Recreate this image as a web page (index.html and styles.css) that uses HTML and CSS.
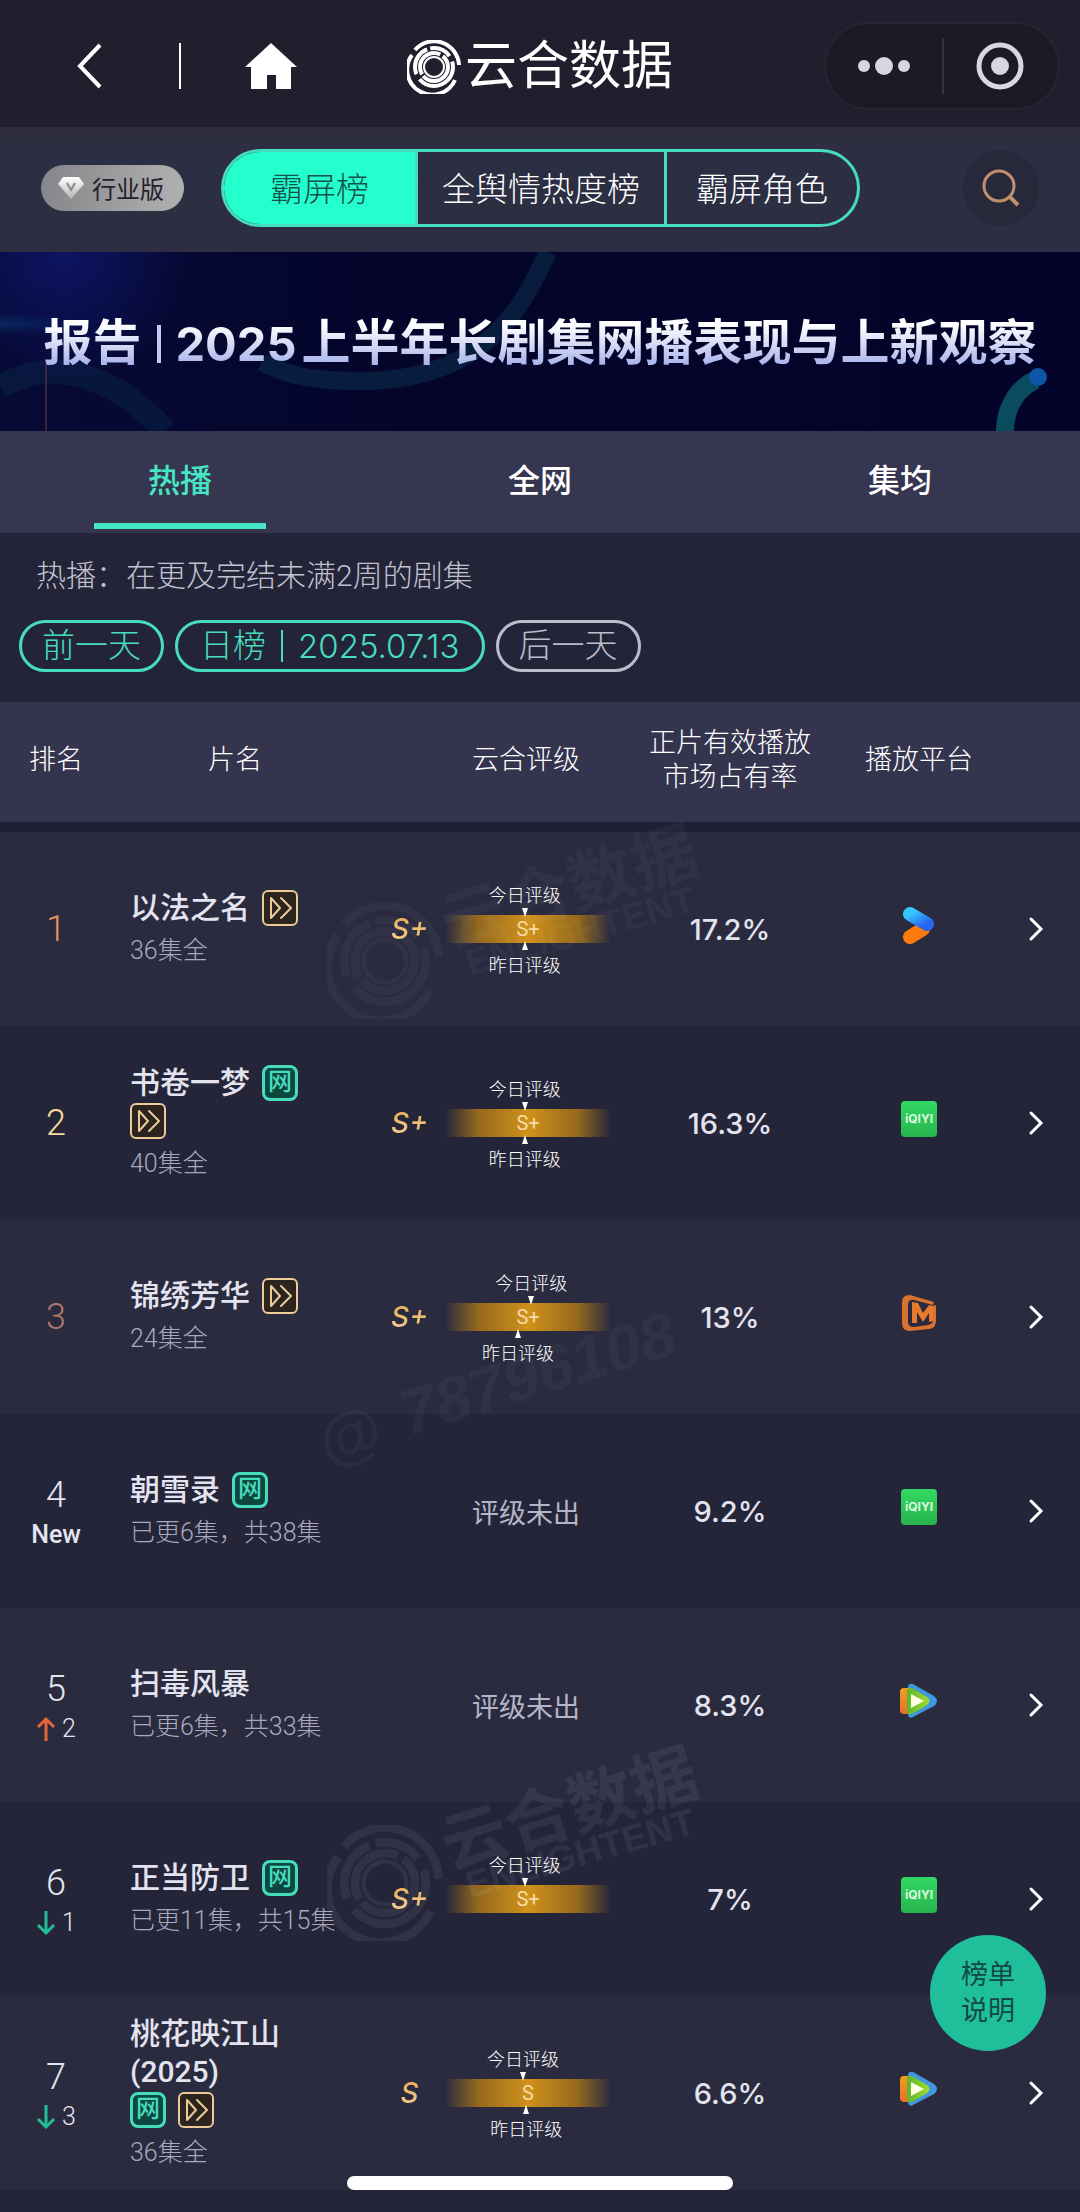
FILE: index.html
```html
<!DOCTYPE html>
<html lang="zh-CN">
<head>
<meta charset="utf-8">
<meta name="viewport" content="width=device-width">
<title>云合数据</title>
<link rel="stylesheet" href="styles.css">
</head>
<body>
<svg class="defs" aria-hidden="true">
  <defs>
    <linearGradient id="g-blue" x1="0" y1="0" x2="1" y2="1"><stop offset="0" stop-color="#35c8ff"/><stop offset="1" stop-color="#2a62f2"/></linearGradient>
    <linearGradient id="g-orange" x1="0" y1="0" x2="0" y2="1"><stop offset="0" stop-color="#f0a020"/><stop offset="1" stop-color="#e8702a"/></linearGradient>
    <linearGradient id="g-lime" x1="0" y1="0" x2="1" y2="0"><stop offset="0" stop-color="#5cb52c"/><stop offset="1" stop-color="#a5dc2e"/></linearGradient>
    <linearGradient id="g-gem" x1="0" y1="0" x2="0" y2="1"><stop offset="0" stop-color="#ffffff"/><stop offset="1" stop-color="#b4b4b4"/></linearGradient>
  </defs>
  <symbol id="youku" viewBox="0 0 36 40">
    <path d="M9 32 L22 24" stroke="#ff7a0e" stroke-width="14" stroke-linecap="round"/>
    <path d="M9 9 L26 19" stroke="url(#g-blue)" stroke-width="14" stroke-linecap="round"/>
  </symbol>
  <symbol id="mango" viewBox="0 0 36 38">
    <path fill-rule="evenodd" d="M9 1 L33 8 L32 11 L13 6 Q7 5 7 11 V28 Q7 33 13 33 L27 31 Q32 30 32 26 V12 L35 11 V27 Q35 34 28 35 L9 37 Q1 37 1 29 V8 Q1 1 9 1Z" fill="#d9722e"/>
    <path d="M11 29 V8 L17 9 L22 19 L28 11 L32 12 V27 L28 28 V19 L22 28 L16 18 V29Z" fill="#e87a2c"/>
  </symbol>
  <symbol id="tencent" viewBox="0 0 40 36">
    <path d="M9 3 Q10 0 14 1 L35 13 Q41 18 35 23 L14 34 Q10 36 9 32Z" fill="#3f97de"/>
    <path d="M1 9 Q1 5 5 5 L11 5 V31 H5 Q1 31 1 27Z" fill="url(#g-orange)"/>
    <path d="M8 7 Q9 4 13 5 L28 14 Q33 18 28 22 L13 31 Q9 32 8 29Z" fill="url(#g-lime)"/>
    <path d="M12 11 L25 18 L12 25Z" fill="#ffffe2"/>
  </symbol>
  <symbol id="chevron" viewBox="0 0 16 26">
    <path d="M3 3 L13 13 L3 23" fill="none" stroke="#fff" stroke-width="3" stroke-linecap="round"/>
  </symbol>
  <symbol id="vip" viewBox="0 0 36 36">
    <rect x="1" y="1" width="34" height="34" rx="5" fill="#2b241f" stroke="#eccb98" stroke-width="2"/>
    <path d="M9 8 V28 L18 18Z M19 8 L29 18 L19 28" fill="none" stroke="#eccb98" stroke-width="2" stroke-linejoin="round" stroke-linecap="round"/>
  </symbol>
  <symbol id="up" viewBox="0 0 20 26">
    <path d="M10 25 V3 M2 11 L10 3 L18 11" fill="none" stroke="currentColor" stroke-width="3"/>
  </symbol>
  <symbol id="down" viewBox="0 0 20 26">
    <path d="M10 1 V23 M2 15 L10 23 L18 15" fill="none" stroke="currentColor" stroke-width="3"/>
  </symbol>
  <symbol id="rings" viewBox="0 0 54 54">
    <g fill="none" stroke="currentColor">
      <circle cx="27" cy="27" r="10" stroke-width="2"/>
      <circle cx="27" cy="27" r="14" stroke-width="4" stroke-dasharray="34 2 36 3"/>
      <circle cx="27" cy="27" r="19" stroke-width="4" stroke-dasharray="46 6 30 3 22 6"/>
      <path d="M8 10 A25 25 0 0 1 52 25 M48 40 A25 25 0 1 1 5 15" stroke-width="4"/>
    </g>
  </symbol>
</svg>

<header class="navbar">
  <button class="icon-button back" aria-label="返回"><svg width="28" height="48" viewBox="0 0 28 48"><path d="M24 3 L4 24 L24 45" fill="none" stroke="#fff" stroke-width="4"/></svg></button>
  <span class="nav-divider"></span>
  <button class="icon-button home" aria-label="首页"><svg width="52" height="46" viewBox="0 0 52 46"><path d="M26 0 L52 24 H46 V46 H31 V32 H22 V46 H6 V24 H0Z" fill="#fff"/></svg></button>
  <h1 class="brand"><svg width="54" height="54"><use href="#rings"/></svg>云合数据</h1>
  <div class="capsule">
    <button class="icon-button" aria-label="更多"><svg width="54" height="20" viewBox="0 0 54 20"><g fill="#d8d6e0"><circle cx="7" cy="10" r="6"/><circle cx="27" cy="10" r="9"/><circle cx="47" cy="10" r="6"/></g></svg></button>
    <button class="icon-button" aria-label="关闭"><svg width="48" height="48" viewBox="0 0 48 48"><circle cx="24" cy="24" r="21" fill="none" stroke="#d8d6e0" stroke-width="5"/><circle cx="24" cy="24" r="9" fill="#d8d6e0"/></svg></button>
  </div>
</header>

<div class="toolbar">
  <button class="edition"><svg width="26" height="22" viewBox="0 0 26 22"><path d="M5 0 H21 L26 7 L13 22 L0 7Z" fill="url(#g-gem)"/><path d="M9 6 L13 13 L17 6" fill="none" stroke="#888" stroke-width="2"/></svg>行业版</button>
  <div class="segments">
    <button class="segment is-active">霸屏榜</button>
    <button class="segment">全舆情热度榜</button>
    <button class="segment">霸屏角色</button>
  </div>
  <button class="search" aria-label="搜索"><svg width="40" height="40" viewBox="0 0 40 40"><circle cx="18" cy="18" r="15" fill="none" stroke="#c0906c" stroke-width="3"/><path d="M29 29 L37 37" stroke="#c0906c" stroke-width="4"/></svg></button>
</div>

<a class="banner" href="#report">
  <svg class="banner-art" viewBox="0 0 1080 179" preserveAspectRatio="none" aria-hidden="true">
    <path d="M548 0 C520 60 480 140 330 128 C300 126 280 120 262 110" fill="none" stroke="#0b3350" stroke-width="18" opacity=".5"/>
    <path d="M0 135 C60 100 120 130 165 179" fill="none" stroke="#0b3050" stroke-width="24" opacity=".35"/>
    <path d="M1005 179 C1005 155 1018 135 1036 128" fill="none" stroke="#0b5f6e" stroke-width="18" opacity=".8"/>
    <circle cx="1038" cy="125" r="9" fill="#0f55a8"/>
    <path d="M46 110 V179" stroke="#3a2440" stroke-width="2"/>
  </svg>
  <span class="banner-title"><span>报告</span><span class="banner-bar"></span><span class="banner-year">2025</span><span>上半年长剧集网播表现与上新观察</span></span>
</a>

<nav class="tabs">
  <a class="tab is-active" href="#hot">热播</a>
  <a class="tab" href="#all">全网</a>
  <a class="tab" href="#avg">集均</a>
</nav>

<section class="filters">
  <p class="filter-note">热播：在更及完结未满2周的剧集</p>
  <div class="dates">
    <button class="pill">前一天</button>
    <button class="pill pill-date">日榜<span class="pill-bar"></span><span class="date">2025.07.13</span></button>
    <button class="pill is-disabled">后一天</button>
  </div>
</section>

<main class="board">
<table class="ranking">
  <colgroup><col class="c-rank"><col class="c-title"><col class="c-grade"><col class="c-share"><col class="c-platform"><col class="c-more"></colgroup>
  <thead>
    <tr><th>排名</th><th>片名</th><th class="th-grade">云合评级</th><th>正片有效播放<br>市场占有率</th><th>播放平台</th><th></th></tr>
  </thead>
  <tbody>
    <tr>
      <td class="rank gold">1</td>
      <td class="title"><div class="name"><span>以法之名</span><svg class="badge"><use href="#vip"/></svg></div><div class="sub">36集全</div></td>
      <td><div class="grade"><span class="level">S+</span><div class="meter"><span class="mark today" style="left:48%">今日评级</span><span class="bar">S+</span><span class="mark yesterday" style="left:48%">昨日评级</span></div></div></td>
      <td class="share">17.2%</td>
      <td class="platform"><svg width="36" height="40" role="img" aria-label="优酷"><use href="#youku"/></svg></td>
      <td class="more"><a href="#1" aria-label="详情"><svg width="16" height="26"><use href="#chevron"/></svg></a></td>
    </tr>
    <tr>
      <td class="rank silver">2</td>
      <td class="title"><div class="name"><span>书卷一梦</span><span class="badge net">网</span><svg class="badge"><use href="#vip"/></svg></div><div class="sub">40集全</div></td>
      <td><div class="grade"><span class="level">S+</span><div class="meter"><span class="mark today" style="left:48%">今日评级</span><span class="bar">S+</span><span class="mark yesterday" style="left:48%">昨日评级</span></div></div></td>
      <td class="share">16.3%</td>
      <td class="platform"><div class="iqiyi">iQIYI</div></td>
      <td class="more"><a href="#2" aria-label="详情"><svg width="16" height="26"><use href="#chevron"/></svg></a></td>
    </tr>
    <tr>
      <td class="rank bronze">3</td>
      <td class="title"><div class="name"><span>锦绣芳华</span><svg class="badge"><use href="#vip"/></svg></div><div class="sub">24集全</div></td>
      <td><div class="grade"><span class="level">S+</span><div class="meter"><span class="mark today" style="left:52%">今日评级</span><span class="bar">S+</span><span class="mark yesterday" style="left:44%">昨日评级</span></div></div></td>
      <td class="share">13%</td>
      <td class="platform"><svg width="36" height="38" role="img" aria-label="芒果TV"><use href="#mango"/></svg></td>
      <td class="more"><a href="#3" aria-label="详情"><svg width="16" height="26"><use href="#chevron"/></svg></a></td>
    </tr>
    <tr>
      <td class="rank moved">4<div class="change is-new">New</div></td>
      <td class="title"><div class="name"><span>朝雪录</span><span class="badge net">网</span></div><div class="sub">已更6集，共38集</div></td>
      <td class="pending">评级未出</td>
      <td class="share">9.2%</td>
      <td class="platform"><div class="iqiyi">iQIYI</div></td>
      <td class="more"><a href="#4" aria-label="详情"><svg width="16" height="26"><use href="#chevron"/></svg></a></td>
    </tr>
    <tr>
      <td class="rank moved">5<div class="change"><svg class="up" width="20" height="26"><use href="#up"/></svg>2</div></td>
      <td class="title"><div class="name"><span>扫毒风暴</span></div><div class="sub">已更6集，共33集</div></td>
      <td class="pending">评级未出</td>
      <td class="share">8.3%</td>
      <td class="platform"><svg width="40" height="36" role="img" aria-label="腾讯视频"><use href="#tencent"/></svg></td>
      <td class="more"><a href="#5" aria-label="详情"><svg width="16" height="26"><use href="#chevron"/></svg></a></td>
    </tr>
    <tr>
      <td class="rank moved">6<div class="change"><svg class="down" width="20" height="26"><use href="#down"/></svg>1</div></td>
      <td class="title"><div class="name"><span>正当防卫</span><span class="badge net">网</span></div><div class="sub">已更11集，共15集</div></td>
      <td><div class="grade"><span class="level">S+</span><div class="meter"><span class="mark today" style="left:48%">今日评级</span><span class="bar">S+</span></div></div></td>
      <td class="share">7%</td>
      <td class="platform"><div class="iqiyi">iQIYI</div></td>
      <td class="more"><a href="#6" aria-label="详情"><svg width="16" height="26"><use href="#chevron"/></svg></a></td>
    </tr>
    <tr>
      <td class="rank moved">7<div class="change"><svg class="down" width="20" height="26"><use href="#down"/></svg>3</div></td>
      <td class="title"><div class="name"><span>桃花映江山(2025)</span><span class="badge net">网</span><svg class="badge"><use href="#vip"/></svg></div><div class="sub">36集全</div></td>
      <td><div class="grade"><span class="level">S</span><div class="meter"><span class="mark today" style="left:47%">今日评级</span><span class="bar">S</span><span class="mark yesterday" style="left:49%">昨日评级</span></div></div></td>
      <td class="share">6.6%</td>
      <td class="platform"><svg width="40" height="36" role="img" aria-label="腾讯视频"><use href="#tencent"/></svg></td>
      <td class="more"><a href="#7" aria-label="详情"><svg width="16" height="26"><use href="#chevron"/></svg></a></td>
    </tr>
  </tbody>
</table>
<svg class="watermark wm-top" viewBox="0 0 420 240" aria-hidden="true">
  <use href="#rings" x="17" y="105" width="116" height="116"/>
  <text transform="translate(140 150) rotate(-17)" class="wm-name">云合数据</text>
  <text transform="translate(160 178) rotate(-16)" class="wm-latin">ENLIGHTENT</text>
</svg>
<svg class="watermark wm-id" viewBox="0 0 420 240" aria-hidden="true">
  <text transform="translate(16 218) rotate(-17)" class="wm-number">@</text>
  <text transform="translate(98 188) rotate(-17)" class="wm-number">78796108</text>
</svg>
<svg class="watermark wm-bottom" viewBox="0 0 420 240" aria-hidden="true">
  <use href="#rings" x="17" y="105" width="116" height="116"/>
  <text transform="translate(140 150) rotate(-17)" class="wm-name">云合数据</text>
  <text transform="translate(160 178) rotate(-16)" class="wm-latin">ENLIGHTENT</text>
</svg>
</main>

<button class="help">榜单<br>说明</button>
<div class="home-indicator"></div>
</body>
</html>
```

FILE: styles.css
```css
* { box-sizing: border-box; }

body {
  margin: 0;
  padding-bottom: 20px;
  background: #232438;
  color: #e4e3f0;
  font-family: Roboto, "Noto Sans CJK SC", sans-serif;
  font-weight: 300;
}

button {
  margin: 0;
  padding: 0;
  border: 0;
  background: none;
  color: inherit;
  font: inherit;
}

a { color: inherit; text-decoration: none; }
svg { display: block; flex: none; }
.defs { position: absolute; width: 0; height: 0; }

/* Top bar */
.navbar {
  display: flex;
  align-items: center;
  height: 127px;
  padding: 5px 20px 0 76px;
  background: #211f2d;
}
.back { margin-right: 75px; }
.nav-divider { width: 2px; height: 46px; background: #fff; }
.home { margin-left: 64px; }
.brand {
  display: flex;
  align-items: center;
  gap: 4px;
  margin: 0 auto 0 110px;
  padding-top: 2px;
  color: #fff;
  font-size: 52px;
  font-weight: 400;
  line-height: 60px;
}
.capsule {
  display: grid;
  grid-template-columns: 1fr 1fr;
  width: 236px;
  height: 88px;
  border: 2px solid #262532;
  border-radius: 44px;
  background: #1b1a26;
}
.capsule .icon-button { display: grid; place-items: center; }
.capsule .icon-button + .icon-button { background: linear-gradient(#33323f, #33323f) left center / 2px 56px no-repeat; }

/* Toolbar */
.toolbar {
  display: flex;
  align-items: center;
  justify-content: space-between;
  height: 125px;
  padding: 0 41px 4px;
  background: linear-gradient(#302e40, #2b2f43 30%, #2e2d41);
}
.edition {
  display: flex;
  align-items: center;
  gap: 8px;
  height: 46px;
  padding: 0 20px 0 17px;
  border-radius: 23px;
  background: linear-gradient(100deg, #858488, #b2b1b2);
  color: #23222b;
  font-size: 24px;
  font-weight: 400;
}
.segments {
  display: flex;
  height: 78px;
  margin-right: 66px;
  overflow: hidden;
  border: 3px solid #46dcbc;
  border-radius: 39px;
  color: #fff;
  font-size: 33px;
}
.segment { padding: 0 24px 2px; }
.segment:first-child { padding: 0 46px 2px; }
.segment:last-child { padding: 0 29px 2px; }
.segment + .segment { border-left: 3px solid #46dcbc; }
.segment.is-active { background: #24ffcd; color: #14514f; }
.search {
  display: grid;
  place-items: center;
  width: 76px;
  height: 76px;
  border-radius: 50%;
  background: #27283a;
}

/* Banner */
.banner {
  display: grid;
  grid-template-columns: minmax(0, 1fr);
  align-items: center;
  height: 179px;
  background:
    radial-gradient(circle at 6% 0, #0d1462 0, transparent 130px),
    radial-gradient(ellipse at 0 40%, #06305c 0, transparent 100px),
    linear-gradient(90deg, #060a35, #05052b 40%, #04042a);
}
.banner > * { grid-area: 1 / 1; }
.banner-art { width: 100%; height: 100%; }
.banner-title {
  display: flex;
  justify-content: center;
  align-items: center;
  padding-top: 4px;
  font-size: 49px;
  font-weight: 700;
  line-height: 64px;
}
.banner-title span {
  background: linear-gradient(#fff 20%, #c9cff2 60%, #8d9de6);
  background-clip: text;
  -webkit-background-clip: text;
  color: transparent;
}
.banner-title .banner-bar {
  width: 4px;
  height: 38px;
  margin: 0 15px;
  background: #c3caf0;
}
.banner-title .banner-year {
  margin-right: 5px;
  font-family: Inter, sans-serif;
  font-size: 47px;
}

/* Tabs */
.tabs {
  display: grid;
  grid-template-columns: repeat(3, 1fr);
  height: 102px;
  background: #373651;
}
.tab {
  display: flex;
  flex-direction: column;
  align-items: center;
  justify-content: space-between;
  padding: 28px 0 4px;
  color: #fff;
  font-size: 32px;
  font-weight: 500;
  line-height: 44px;
}
.tab.is-active { color: #45e6c4; }
.tab.is-active::after {
  content: "";
  width: 172px;
  height: 6px;
  background: #45e6c4;
}

/* Filters */
.filters { padding: 22px 19px 30px; }
.filter-note {
  margin: 0 0 23px;
  padding-left: 17px;
  color: #c2c1d0;
  font-size: 30px;
  line-height: 42px;
}
.dates { display: flex; gap: 11px; }
.pill {
  height: 52px;
  padding: 0 20px;
  border: 3px solid #46dcbc;
  border-radius: 26px;
  color: #46dcbc;
  font-size: 33px;
  line-height: 44px;
}
.pill-date { display: flex; align-items: center; padding: 0 22px; }
.pill-bar { width: 2px; height: 32px; margin: 0 15px; background: #46dcbc; }
.date { font-family: Inter, sans-serif; }
.pill.is-disabled { border-color: #bdbccb; color: #bdbccb; }

/* Ranking */
.board { position: relative; overflow: hidden; }
.ranking {
  width: 100%;
  border-spacing: 0;
  table-layout: fixed;
}
.c-rank { width: 112px; }
.c-grade { width: 282px; }
.c-share { width: 180px; }
.c-platform { width: 198px; }
.c-more { width: 62px; }

th {
  height: 130px;
  padding: 0 0 4px;
  border-bottom: 10px solid #1f2034;
  background: #35344e;
  color: #fff;
  font-size: 27px;
  font-weight: 300;
  line-height: 34px;
}
.th-grade { padding-left: 54px; }

td { height: 194px; padding: 0; text-align: center; }
tbody tr:nth-child(odd) { background: #2a2b3f; }
tbody tr:nth-child(even) { background: #242539; }

.rank { color: #e4e3f0; font-size: 36px; line-height: 42px; }
.rank.moved { padding-top: 6px; }
.rank.gold { color: #e5925a; }
.rank.silver { color: #f6dc9c; }
.rank.bronze { color: #a9796c; }
.change {
  display: flex;
  justify-content: center;
  align-items: center;
  gap: 6px;
  font-size: 25px;
  line-height: 38px;
}
.is-new { font-weight: 500; }
.up { color: #e8623a; }
.down { color: #22bf96; }

td.title { padding: 4px 0 0 18px; text-align: left; }
.name {
  display: flex;
  flex-wrap: wrap;
  align-items: center;
  column-gap: 12px;
  width: 182px;
  font-size: 30px;
  font-weight: 500;
  line-height: 38px;
}
.badge { width: 36px; height: 36px; margin: 1px 0; }
.net {
  border: 3px solid #46dcbc;
  border-radius: 8px;
  background: #0d473f;
  color: #46dcbc;
  font-size: 24px;
  line-height: 28px;
  text-align: center;
}
.sub {
  padding-top: 2px;
  color: #a9a8bc;
  font-size: 25px;
  line-height: 44px;
  white-space: nowrap;
}

.grade { display: flex; align-items: center; padding-left: 16px; }
.level {
  width: 71px;
  background: linear-gradient(#e8a94e, #f3d19a);
  background-clip: text;
  -webkit-background-clip: text;
  color: transparent;
  font-family: Inter, sans-serif;
  font-size: 28px;
  font-style: italic;
  font-weight: 500;
}
.meter { position: relative; width: 166px; }
.bar {
  display: block;
  background: linear-gradient(90deg, transparent, #94691f 20%, #d1911b 50%, #94691f 80%, transparent);
  color: #f5dba6;
  font-size: 20px;
  font-weight: 400;
  line-height: 28px;
}
.mark {
  position: absolute;
  z-index: 1;
  display: flex;
  flex-direction: column;
  align-items: center;
  color: #fff;
  font-size: 18px;
  line-height: 24px;
  white-space: nowrap;
  transform: translateX(-50%);
}
.today { bottom: 26px; }
.yesterday { top: 26px; }
.today::after,
.yesterday::before {
  content: "";
  border: solid transparent;
  border-width: 0 3px;
}
.today::after { border-top: 9px solid #fff; }
.yesterday::before { margin-bottom: 4px; border-bottom: 9px solid #fff; }

.pending {
  padding-left: 54px;
  color: #b6b5c7;
  font-size: 27px;
  font-weight: 400;
}
.share {
  font-family: Inter, sans-serif;
  font-size: 29px;
  font-weight: 500;
}
.platform { padding-bottom: 8px; }
.platform svg { margin: 0 auto; }
.iqiyi {
  width: 36px;
  height: 36px;
  margin: 0 auto;
  border-radius: 4px;
  background: linear-gradient(#33d863, #28b44c);
  color: #d9fbe0;
  font: 700 12px/36px Inter, sans-serif;
}
.more a { display: block; padding-left: 10px; }

/* Watermarks */
.watermark {
  position: absolute;
  left: 310px;
  width: 420px;
  height: 240px;
  color: #fff;
  fill: #fff;
  opacity: .03;
  pointer-events: none;
}
.wm-top { top: 96px; }
.wm-id { top: 546px; }
.wm-bottom { top: 1018px; opacity: .06; }
.wm-name { font: 700 66px "Noto Sans CJK SC", sans-serif; }
.wm-latin { font: 700 37px "Liberation Sans", sans-serif; }
.wm-number { font: italic 700 64px "Liberation Sans", sans-serif; }

/* Floating items */
.help {
  position: fixed;
  right: 34px;
  bottom: 161px;
  width: 116px;
  height: 116px;
  border-radius: 50%;
  background: #20bf9c;
  color: #124944;
  font-size: 27px;
  font-weight: 400;
  line-height: 36px;
}
.home-indicator {
  position: fixed;
  bottom: 22px;
  left: 50%;
  width: 386px;
  height: 14px;
  margin-left: -193px;
  border-radius: 7px;
  background: #fff;
}
```
